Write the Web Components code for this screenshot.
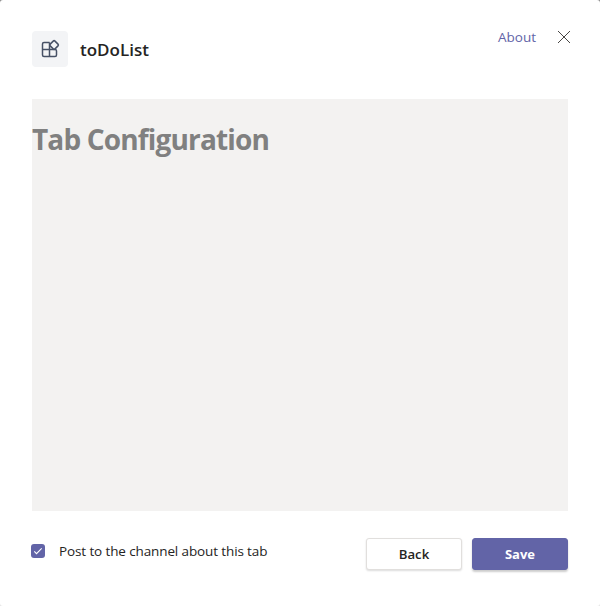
<!DOCTYPE html>
<html lang="en">
<head>
<meta charset="utf-8">
<title>toDoList</title>
<style>
html,body{margin:0;height:100%;overflow:hidden}
html{background:linear-gradient(#8a8a8a 50%,#e6e6e6 50%)}
body{font-family:"Open Sans","Noto Sans",sans-serif;color:#252423}
</style>
</head>
<body>
<tab-dialog>
  <app-header slot="header" name="toDoList"></app-header>
  <config-frame>Tab Configuration</config-frame>
  <check-option slot="footer">Post to the channel about this tab</check-option>
  <dialog-button slot="footer">Back</dialog-button>
  <dialog-button slot="footer" primary>Save</dialog-button>
</tab-dialog>
<script>
const define = (name, markup) => customElements.define(name, class extends HTMLElement {
  constructor() {
    super();
    this.attachShadow({mode: 'open'}).innerHTML = markup;
  }
  connectedCallback() {
    const title = this.shadowRoot.querySelector('.name');
    if (title) title.textContent = this.getAttribute('name');
  }
});

define('tab-dialog', `
<style>
:host{display:grid;grid-template-rows:99px 412px 1fr;box-sizing:border-box;width:600px;height:606px;padding:0 32px;background:#fff;border-radius:3px}
footer{display:flex;align-items:flex-start;padding-top:27px;gap:10px}
</style>
<slot name="header"></slot><slot></slot><footer><slot name="footer"></slot></footer>`);

define('app-header', `
<style>
:host{display:flex;align-items:flex-start;padding-top:31px;box-sizing:border-box}
.tile{width:36px;height:36px;border-radius:4px;background:#f3f4f6;display:grid;place-items:center}
.tile svg{display:block}
.name{margin:0 auto 0 12px;font-size:17px;font-weight:600;line-height:38px}
a{color:#6264a7;font-size:13.5px;line-height:20px;margin-top:-4px}
.close{margin:0 -3px 0 21px;display:block}
</style>
<div class="tile"><svg width="36" height="36" viewBox="0 0 36 36" fill="none" stroke="#475166" stroke-width="1.5" stroke-linejoin="round"><path d="M17.6 11.5h-5.6q-1.5 0-1.5 1.5v11q0 1.5 1.5 1.5h11q1.5 0 1.5-1.5v-4.3M10.5 18.5h12.6q1.4 0 1.4 1.4M17.5 11.5v14"/><path d="M21.2 10.1q.9-.9 1.8 0l3 3q.9.9 0 1.8l-3 3q-.9.9-1.8 0l-3-3q-.9-.9 0-1.8Z"/></svg></div>
<div class="name"></div><a>About</a>
<svg class="close" width="14" height="12" viewBox="0 0 14 12" fill="none" stroke="#484644"><path d="M1 0l12 12M13 0L1 12"/></svg>`);

define('config-frame', `
<style>
:host{display:block;background:#f3f2f1;overflow:hidden}
h1{margin:20px 0 0;font-size:28px;line-height:40px;font-weight:700;color:#808080;letter-spacing:-.84px}
</style><h1><slot></slot></h1>`);

define('check-option', `
<style>
:host{display:flex;align-items:center;margin:3px auto 0 -1px;font-size:13.5px;line-height:20px;letter-spacing:-.12px}
svg{display:block;margin-right:14px}
</style>
<svg width="14" height="14" viewBox="0 0 14 14"><rect width="14" height="14" rx="3" fill="#6264a7"/><path d="M3.3 7.4l2.2 2.2 5.2-5.2" fill="none" stroke="#fff" stroke-width="1.1"/></svg><slot></slot>`);

define('dialog-button', `
<style>
:host{display:block;width:96px;height:32px}
button{box-sizing:border-box;width:100%;height:100%;padding:0;border:1px solid #e1dfdd;border-radius:3px;background:#fff;color:#252423;font:600 13.2px/30px "Open Sans","Noto Sans",sans-serif;box-shadow:0 1px 2px rgba(0,0,0,.14)}
:host([primary]) button{background:#6264a7;border-color:#6264a7;color:#fff;font-weight:700;font-size:13px;box-shadow:0 2px 2px rgba(0,0,0,.2)}
</style><button><slot></slot></button>`);
</script>
</body>
</html>
